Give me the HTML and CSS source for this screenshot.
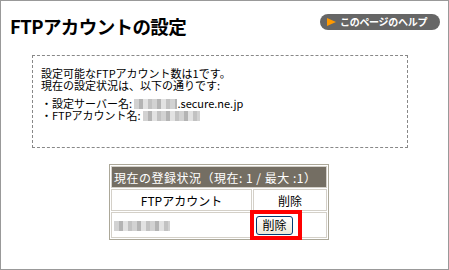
FILE: index.html
```html
<!DOCTYPE html>
<html lang="ja">
<head>
    <meta charset="UTF-8">
    <title>FTPアカウントの設定</title>
    <link rel="stylesheet" href="styles.css">
</head>
<body>
<div class="page">
    <div class="header">
        <h1 class="title">FTPアカウントの設定</h1>
        <a class="help" href="#">
            <svg class="help-arrow" width="9" height="8" viewBox="0 0 9 8"><polygon points="0,0 9,4 0,8" fill="#ff9900"/></svg>
            このページのヘルプ
        </a>
    </div>

    <div class="info">
        <p class="info-lines">設定可能なFTPアカウント数は1です。<br>現在の設定状況は、以下の通りです:</p>
        <p class="info-lines info-list">・設定サーバー名: <span class="blur blur-server"></span>.secure.ne.jp<br>・FTPアカウント名: <span class="blur blur-account"></span></p>
    </div>

    <table class="accounts">
        <colgroup>
            <col class="col-name">
            <col class="col-del">
        </colgroup>
        <tr>
            <th class="caption" colspan="2">現在の登録状況（現在: 1 / 最大 :1）</th>
        </tr>
        <tr>
            <td class="head">FTPアカウント</td>
            <td class="head">削除</td>
        </tr>
        <tr>
            <td class="row"><span class="blur blur-row"></span></td>
            <td class="row row-del"><span class="marked"><button class="btn">削除</button></span></td>
        </tr>
    </table>
</div>
</body>
</html>
```

FILE: styles.css
```css
body {
    margin: 0;
    font-family: "Noto Sans CJK JP", "Noto Sans", sans-serif;
    font-size: 11px;
    color: #000;
    background: #fff;
}
.page {
    box-sizing: border-box;
    width: 449px;
    height: 270px;
    border: 1px solid #999;
}
.header {
    display: flex;
    justify-content: space-between;
    align-items: flex-start;
    height: 54px;
    padding: 0 8px 0 9px;
}
.title {
    margin: 0;
    padding-top: 12px;
    font-size: 18.5px;
    line-height: 26px;
    font-weight: bold;
    letter-spacing: -0.6px;
}
.help {
    display: flex;
    align-items: center;
    gap: 4px;
    margin-top: 13px;
    width: 120px;
    height: 16px;
    box-sizing: border-box;
    padding-left: 7px;
    border-radius: 8px;
    background: #666;
    color: #fff;
    font-size: 10px;
    font-weight: bold;
    line-height: 16px;
    text-decoration: none;
    letter-spacing: -0.3px;
}
.help-arrow {
    display: block;
}
.info {
    width: 376px;
    box-sizing: border-box;
    margin-left: 31px;
    padding: 11px 8px 26px 8px;
    border: 1px dashed #888;
}
.info-lines {
    margin: 0;
    line-height: 12px;
}
.info-list {
    margin-top: 6px;
}
.blur {
    display: inline-block;
    height: 10px;
    vertical-align: -1px;
    background: repeating-linear-gradient(90deg, #d2d2d2 0 5px, #b4b4b4 5px 9px, #e2e2e2 9px 14px, #c2c2c2 14px 18px);
}
.blur-server {
    width: 43px;
}
.blur-account {
    width: 57px;
}
.blur-row {
    width: 56px;
}
.accounts {
    margin: 16px 0 0 108px;
    width: 220px;
    table-layout: fixed;
    border: 1px solid #aca899;
    border-spacing: 1px;
}
.col-name {
    width: 141px;
}
.accounts th,
.accounts td {
    border: 1px solid #d4d0c8;
    padding: 0 2px;
}
.caption {
    height: 20px;
    background: #746e63;
    color: #fff;
    font-size: 12px;
    font-weight: normal;
    text-align: left;
    white-space: nowrap;
    letter-spacing: 0.5px;
}
.head {
    height: 20px;
    font-size: 12px;
    text-align: center;
}
.row {
    height: 24px;
}
.row-del {
    padding-left: 3px;
}
.marked {
    position: relative;
    display: inline-block;
    vertical-align: middle;
}
.marked::after {
    content: "";
    position: absolute;
    left: -6px;
    right: -9px;
    top: -6px;
    bottom: -5px;
    border: 4px solid #ff0000;
}
.btn {
    display: block;
    width: 37px;
    height: 19px;
    padding: 0;
    border: 1px solid #003c74;
    border-radius: 3px;
    background: linear-gradient(#ffffff, #ece9d8);
    font-family: "Noto Sans CJK JP", sans-serif;
    font-size: 12px;
    line-height: 16px;
}
```
